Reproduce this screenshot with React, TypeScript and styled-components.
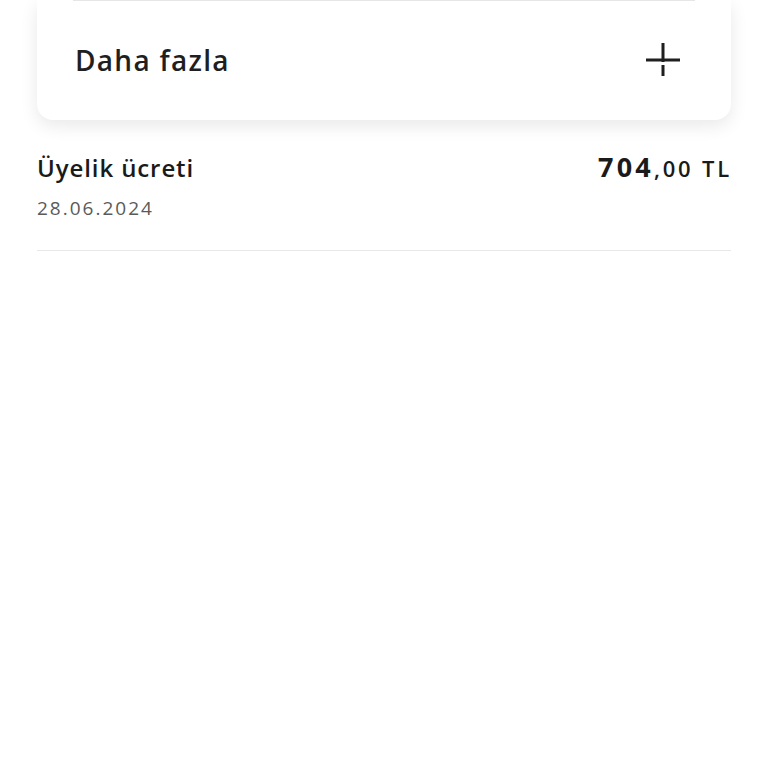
import React from "react";
import styled, { createGlobalStyle } from "styled-components";

const Global = createGlobalStyle`
  html, body { margin: 0; padding: 0; background: #fff; }
  body { font-family: "Open Sans", "Liberation Sans", sans-serif; color: #1c1c1c; }
`;

const Page = styled.div`
  width: 768px;
  height: 768px;
  overflow: hidden;
  box-sizing: border-box;
  padding: 0 37px;
  display: flex;
  flex-direction: column;
`;

const Card = styled.div`
  background: #fff;
  border-radius: 0 0 16px 16px;
  box-shadow: 0 6px 18px rgba(0, 0, 0, 0.09);
  padding: 0 36px;
  height: 120px;
  box-sizing: border-box;
  display: flex;
  flex-direction: column;
`;

const InnerDivider = styled.div`
  height: 1px;
  background: #e6e6e6;
`;

const MoreRow = styled.div`
  flex: 1;
  display: flex;
  align-items: center;
  justify-content: space-between;
  padding-left: 2px;
  padding-right: 14px;
  padding-bottom: 2px;
`;

const MoreLabel = styled.span`
  font-size: 28px;
  font-weight: 600;
  letter-spacing: 1.3px;
  color: #1f1f1f;
`;

const Row = styled.div`
  display: flex;
  justify-content: space-between;
  align-items: flex-start;
  padding-top: 36px;
`;

const Title = styled.div`
  font-size: 24px;
  font-weight: 600;
  color: #1a1a1a;
  line-height: 1;
  letter-spacing: 0.9px;
`;

const DateText = styled.div`
  font-size: 19px;
  color: #5a5a5a;
  margin-top: 19px;
  line-height: 1;
  letter-spacing: 2px;
`;

const Amount = styled.div`
  display: flex;
  align-items: baseline;
  color: #1a1a1a;
  line-height: 1;
  margin-top: -3px;
`;

const AmountMain = styled.span`
  font-size: 27px;
  font-weight: 700;
  letter-spacing: 3.2px;
`;

const AmountRest = styled.span`
  font-size: 22px;
  font-weight: 600;
  letter-spacing: 2.8px;
  margin-right: -1px;
`;

const Divider = styled.div`
  height: 1px;
  background: #e8e8e8;
  margin-top: 32px;
`;

const Left = styled.div`
  display: flex;
  flex-direction: column;
`;

const PlusIcon = () => (
  <svg width="36" height="36" viewBox="0 0 36 36">
    <path d="M18 1 V20 M1 18 H35 M18 23 V34" stroke="#1f1f1f" strokeWidth="3" fill="none" />
  </svg>
);

export default function App() {
  return (
    <Page>
      <Global />
      <Card>
        <InnerDivider />
        <MoreRow>
          <MoreLabel>Daha fazla</MoreLabel>
          <PlusIcon />
        </MoreRow>
      </Card>
      <Row>
        <Left>
          <Title>Üyelik ücreti</Title>
          <DateText>28.06.2024</DateText>
        </Left>
        <Amount>
          <AmountMain>704</AmountMain>
          <AmountRest>,00 TL</AmountRest>
        </Amount>
      </Row>
      <Divider />
    </Page>
  );
}
